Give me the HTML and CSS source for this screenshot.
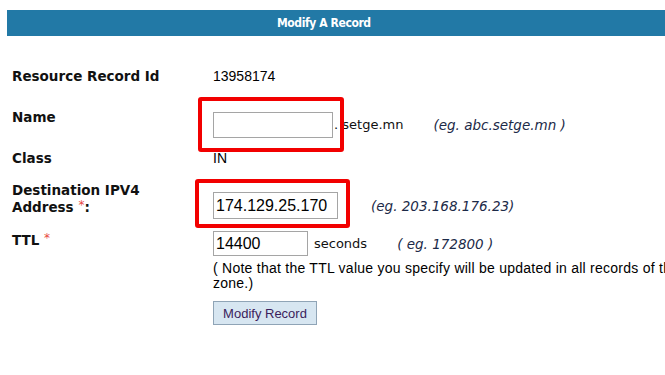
FILE: index.html
```html
<!DOCTYPE html>
<html lang="en">
<head>
    <meta charset="UTF-8">
    <title>Modify A Record</title>
    <link rel="stylesheet" href="styles.css">
</head>
<body>
    <div class="page">
        <div class="titlebar">Modify A Record</div>

        <div class="form">
            <div class="row row-id">
                <div class="label">Resource Record Id</div>
                <div class="value">13958174</div>
            </div>

            <div class="row row-name">
                <div class="label">Name</div>
                <div class="value">
                    <span class="marked mark-name">
                        <input type="text" class="field field-name" value="">
                    </span><span class="suffix">. setge.mn</span>
                    <span class="hint hint-name">(eg. abc.setge.mn )</span>
                </div>
            </div>

            <div class="row row-class">
                <div class="label">Class</div>
                <div class="value">IN</div>
            </div>

            <div class="row row-ip">
                <div class="label">Destination IPV4<br>Address <span class="req">*</span>:</div>
                <div class="value">
                    <span class="marked mark-ip">
                        <input type="text" class="field field-ip" value="174.129.25.170">
                    </span>
                    <span class="hint hint-ip">(eg. 203.168.176.23)</span>
                </div>
            </div>

            <div class="row row-ttl">
                <div class="label">TTL <span class="req">*</span></div>
                <div class="value">
                    <div class="ttl-line">
                        <input type="text" class="field field-ttl" value="14400">
                        <span class="unit">seconds</span>
                        <span class="hint hint-ttl">( eg. 172800 )</span>
                    </div>
                    <p class="note">( Note that the TTL value you specify will be updated in all records of the zone.)</p>
                    <button class="submit">Modify Record</button>
                </div>
            </div>
        </div>
    </div>
</body>
</html>
```

FILE: styles.css
```css
html, body {
    overflow: hidden;
}

body {
    margin: 0;
    padding: 10px 0 0 0;
    background-color: #ffffff;
    color: #000000;
    font-family: "Liberation Sans", Arial, sans-serif;
    font-size: 14px;
}

.page {
    width: 720px;
    margin-left: 7px;
}

.titlebar {
    background-color: #2279a6;
    color: #ffffff;
    height: 26px;
    line-height: 26px;
    padding-left: 270px;
    font-family: "DejaVu Sans Condensed", "DejaVu Sans", sans-serif;
    font-weight: bold;
    font-size: 12px;
    letter-spacing: -0.4px;
}

.form {
    padding-left: 5px;
}

.row {
    display: flex;
    align-items: flex-start;
}

.label {
    width: 201px;
    flex: none;
    font-family: "DejaVu Sans", Verdana, sans-serif;
    font-weight: bold;
    font-size: 13.5px;
    line-height: 16px;
    color: #111111;
}

.value {
    line-height: 16px;
}

.row-id {
    margin-top: 32px;
}

.row-name {
    margin-top: 25px;
}

.row-name .value {
    padding-top: 3px;
    display: flex;
    align-items: center;
}

.row-class {
    margin-top: 12px;
}

.row-ip {
    margin-top: 16px;
}

.row-ip .label {
    line-height: 17px;
}

.row-ip .value {
    padding-top: 10px;
    display: flex;
    align-items: center;
}

.row-ttl {
    margin-top: 12px;
}

.row-ttl .label {
    padding-top: 1px;
}

.req {
    color: #e8483f;
    font-weight: normal;
    font-size: 12px;
    line-height: 0;
    vertical-align: 3px;
}

.field {
    box-sizing: border-box;
    margin: 0;
    border: 1px solid #a5a5a5;
    background: #ffffff;
    font-family: "Liberation Sans", Arial, sans-serif;
    font-size: 16px;
    color: #000000;
    padding: 0 2px;
    outline: none;
}

.field-name {
    width: 120px;
    height: 26px;
}

.field-ip {
    width: 125px;
    height: 27px;
}

.field-ttl {
    width: 95px;
    height: 25px;
}

/* red annotation frames drawn over the screenshot */
.marked {
    position: relative;
    display: inline-block;
    line-height: 0;
}

.marked::after {
    content: "";
    position: absolute;
    border: 4px solid #f20000;
    border-radius: 3px;
}

.mark-name::after {
    left: -15px;
    top: -15px;
    width: 138px;
    height: 47px;
}

.mark-ip::after {
    left: -18px;
    top: -13px;
    width: 147px;
    height: 41px;
}

.suffix,
.unit,
.hint {
    font-family: "DejaVu Sans", Verdana, sans-serif;
    font-size: 13px;
    color: #111111;
}

.suffix {
    margin-left: 1px;
}

.hint {
    font-style: italic;
    font-size: 13.5px;
    color: #1c2a48;
}

.hint-name {
    margin-left: 30px;
}

.hint-ip {
    margin-left: 33px;
}

.ttl-line {
    display: flex;
    align-items: center;
}

.unit {
    margin-left: 6px;
}

.hint-ttl {
    margin-left: 30px;
}

.note {
    width: 490px;
    margin: 5px 0 0 0;
    line-height: 15px;
    font-size: 14px;
    letter-spacing: 0.25px;
}

.submit {
    margin-top: 10px;
    width: 104px;
    height: 24px;
    padding: 0;
    background-color: #d7e6f1;
    border: 1px solid #8fa4b6;
    color: #3b1d5c;
    font-family: "Liberation Sans", Arial, sans-serif;
    font-size: 13px;
}
```
